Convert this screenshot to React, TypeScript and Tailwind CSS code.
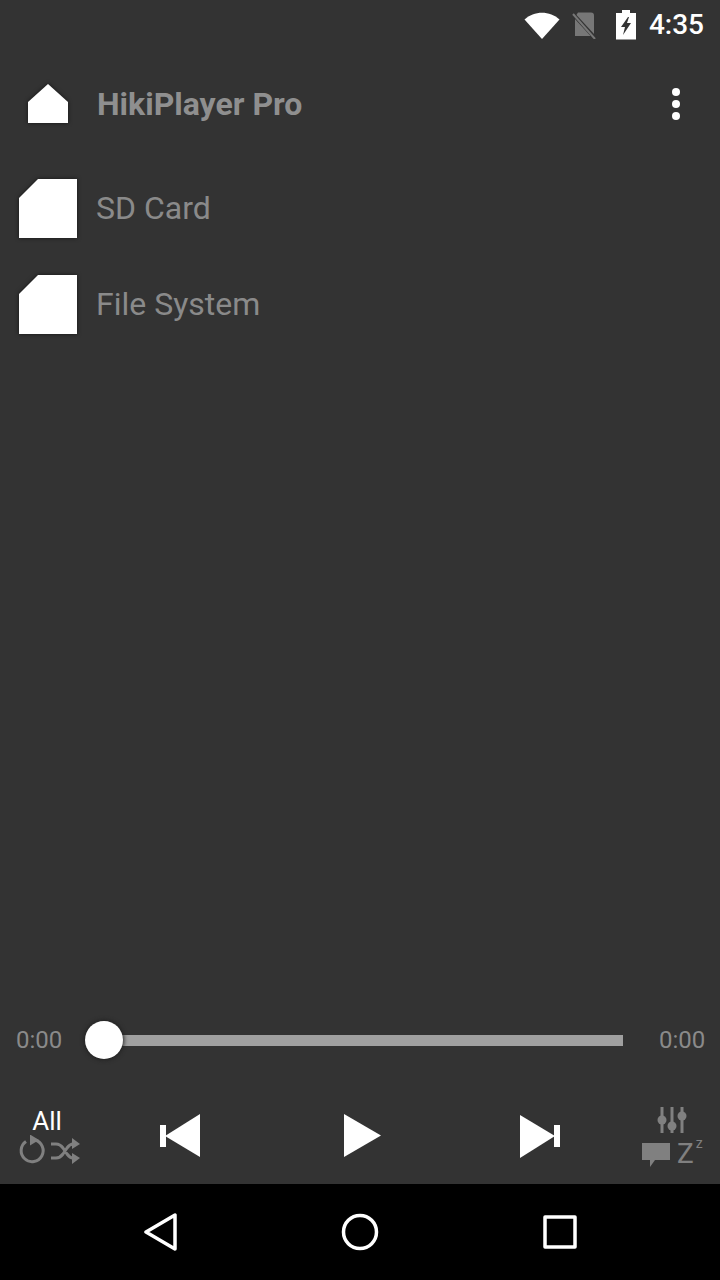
const font = { fontFamily: "Roboto, sans-serif" };

function StatusBar() {
  return (
    <div className="flex h-[48px] items-center justify-end pr-[16px] pt-[1px]">
      {/* wifi */}
      <svg width="36" height="28" viewBox="0 0 36 28" className="mr-[11px]">
        <path d="M0.5 8.5 C10 -0.5 26 -0.5 35.5 8.5 L18 28 Z" fill="#fff" />
      </svg>
      {/* no sim */}
      <svg width="26" height="28" viewBox="0 0 26 28" className="mr-[19px]">
        <path d="M7 1.5 H20 Q23 1.5 23 4.5 V25 H4 V6 Z" fill="#777" />
        <path d="M2 3 L25 28" stroke="#333" strokeWidth="4" />
        <path d="M2 3 L24 28" stroke="#777" strokeWidth="2" />
      </svg>
      {/* charging battery */}
      <svg width="20" height="30" viewBox="0 0 20 30" className="mr-[13px]">
        <path d="M6 0 H14 V3 H20 V29.5 H0 V3 H6 Z" fill="#fff" />
        <path d="M12 7 L5 17 H9 L7 25 L15 13 H11 L13 7 Z" fill="#333" />
      </svg>
      <span className="text-[28px] leading-none font-medium text-white">4:35</span>
    </div>
  );
}

function FolderIcon() {
  return (
    <svg width="58" height="59" viewBox="0 0 58 59" className="drop-shadow-[0_0_2px_rgba(0,0,0,0.6)]">
      <path d="M19 0 H58 V59 H0 V19 Z" fill="#fff" />
    </svg>
  );
}

function FolderRow({ name }: { name: string }) {
  return (
    <div className="flex h-[96px] items-center gap-[19px] pl-[19px]">
      <FolderIcon />
      <span className="text-[32px] leading-none text-[#8a8a8a]">{name}</span>
    </div>
  );
}

function SkipIcon({ flip }: { flip?: boolean }) {
  return (
    <svg width="40" height="44" viewBox="0 0 40 44" className={flip ? "rotate-180" : ""}>
      <rect x="0" y="11" width="6" height="22" fill="#fff" />
      <path d="M40 0 V43 L5 22 Z" fill="#fff" />
    </svg>
  );
}

export default function App() {
  return (
    <div className="flex h-[1280px] w-[720px] flex-col overflow-hidden bg-[#333333]" style={font}>
      <StatusBar />

      {/* Top bar */}
      <div className="flex h-[112px] items-center pl-[28px] pr-[40px]">
        <svg width="40" height="39" viewBox="0 0 40 39" className="mb-[1px] drop-shadow-[0_0_2px_rgba(0,0,0,0.6)]">
          <path d="M20 0 L40 18 V39 H0 V18 Z" fill="#fff" />
        </svg>
        <span className="ml-[29px] flex-1 text-[32px] leading-none font-bold text-[#8f8f8f]">HikiPlayer Pro</span>
        <div className="flex flex-col gap-[4px]">
          <div className="h-[8px] w-[8px] rounded-full bg-white" />
          <div className="h-[8px] w-[8px] rounded-full bg-white" />
          <div className="h-[8px] w-[8px] rounded-full bg-white" />
        </div>
      </div>

      {/* Folder list */}
      <div className="flex-1">
        <FolderRow name="SD Card" />
        <FolderRow name="File System" />
      </div>

      {/* Seek bar */}
      <div className="flex h-[64px] items-center px-[16px] text-[24px] leading-none text-[#8a8a8a]">
        <span className="w-[45px]">0:00</span>
        <div className="relative ml-[43px] mr-[36px] h-[11px] flex-1 bg-[#a0a0a0]">
          <div className="absolute -top-[14px] -left-[19px] h-[38px] w-[38px] rounded-full bg-white shadow-[0_0_4px_1px_#222222]" />
        </div>
        <span className="w-[45px]">0:00</span>
      </div>

      {/* Player controls */}
      <div className="flex h-[112px] items-center pl-[19px] pr-[16px] pt-[16px]">
        <div className="flex w-[62px] flex-col items-center">
          <span className="-ml-[6px] text-[26px] leading-[28px] text-white">All</span>
          <svg width="62" height="30" viewBox="0 0 62 30" fill="none" stroke="#808080" strokeWidth="3">
            <path d="M7 6.5 A11 11 0 1 0 16 5" />
            <path d="M11 -0.5 L20 5 L11 10.5 Z" fill="#808080" stroke="none" />
            <path d="M32 23 L37 23 Q41 23 44 19 L48 13 Q51 9 54 9 M32 9 L37 9 Q41 9 44 13 L48 19 Q51 23 54 23" />
            <path d="M53 3 L61 9 L53 14 Z M53 18 L61 23 L53 29 Z" fill="#808080" stroke="none" />
          </svg>
        </div>

        <div className="flex flex-1 items-center">
          <div className="ml-[79px]"><SkipIcon /></div>
          <svg width="37" height="44" viewBox="0 0 37 44" className="ml-[144px]">
            <path d="M0 0 L37 21.5 L0 43 Z" fill="#fff" />
          </svg>
          <div className="ml-[139px]"><SkipIcon flip /></div>
        </div>

        <div className="flex w-[62px] flex-col items-center">
          <svg width="30" height="28" viewBox="0 0 30 28" fill="#808080" className="mt-[2px] mb-[3px] -ml-[2px]">
            <rect x="3.5" y="0" width="3" height="26" />
            <circle cx="5" cy="13" r="4.5" />
            <rect x="13.5" y="0" width="3" height="26" />
            <circle cx="15" cy="19" r="4.5" />
            <rect x="23.5" y="0" width="3" height="26" />
            <circle cx="25" cy="9" r="4.5" />
          </svg>
          <div className="flex w-[62px] items-start">
            <svg width="28" height="24" viewBox="0 0 28 24" fill="#808080" className="mt-[5px]">
              <path d="M0 0 H28 V17 H13 L8 24 V17 H0 Z" />
            </svg>
            <span className="ml-[7px] mt-[3px] text-[28px] leading-[26px] text-[#808080]">Z</span>
            <span className="ml-[2px] -mt-[2px] text-[14px] leading-[14px] text-[#808080]">z</span>
          </div>
        </div>
      </div>

      {/* Android nav bar */}
      <div className="flex h-[96px] items-center justify-center bg-black">
        <svg width="34" height="38" viewBox="0 0 34 38" fill="none" stroke="#fff" strokeWidth="3.5" strokeLinejoin="round" className="mr-[163px]">
          <path d="M31 2 V36 L2 19 Z" />
        </svg>
        <svg width="38" height="38" viewBox="0 0 38 38" fill="none" stroke="#fff" strokeWidth="3.5">
          <circle cx="19" cy="19" r="16.5" />
        </svg>
        <svg width="34" height="34" viewBox="0 0 34 34" fill="none" stroke="#fff" strokeWidth="3.5" strokeLinejoin="round" className="ml-[164px]">
          <rect x="2" y="2" width="30" height="30" />
        </svg>
      </div>
    </div>
  );
}
